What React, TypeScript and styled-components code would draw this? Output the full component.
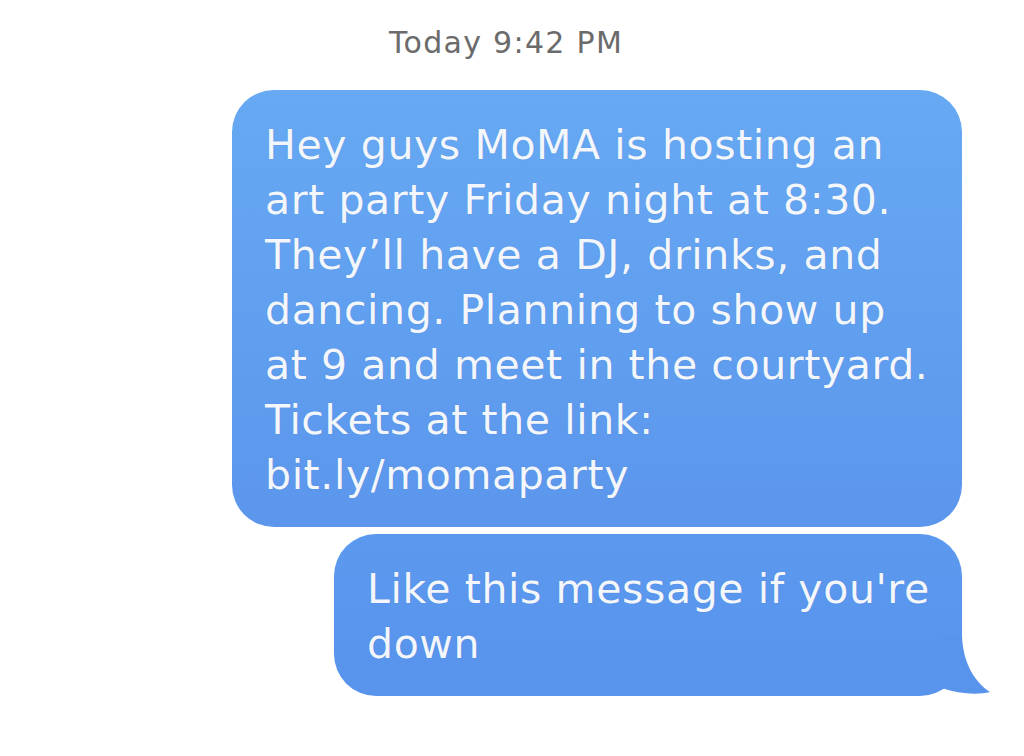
import styled, { createGlobalStyle } from "styled-components";

const GlobalStyle = createGlobalStyle`
  html, body {
    margin: 0;
    padding: 0;
    background: #ffffff;
  }
  body {
    font-family: Verdana, "DejaVu Sans", sans-serif;
  }
`;

const FIRST_MESSAGE = `Hey guys MoMA is hosting an
art party Friday night at 8:30.
They’ll have a DJ, drinks, and
dancing. Planning to show up
at 9 and meet in the courtyard.
Tickets at the link:
bit.ly/momaparty`;

const SECOND_MESSAGE = `Like this message if you're
down`;

const App = () => {
  return (
    <>
      <GlobalStyle />
      <Thread>
        <Timestamp>Today 9:42 PM</Timestamp>
        <Messages>
          <Bubble width="730px">{FIRST_MESSAGE}</Bubble>
          <Bubble width="628px" $tail>
            {SECOND_MESSAGE}
            <Tail viewBox="0 0 50 60" aria-hidden="true">
              <path d="M0 0 L20 0 C21 24 30 44 48 56 C36 59 16 58 0 52 Z" fill="#5994ec" />
            </Tail>
          </Bubble>
        </Messages>
      </Thread>
    </>
  );
};

export default App;

const Thread = styled.div`
  width: 1024px;
  height: 756px;
  display: flex;
  flex-direction: column;
  padding: 26px 62px 0 0;
  box-sizing: border-box;
`;

const Timestamp = styled.div`
  align-self: flex-start;
  margin-left: 389px;
  color: #6b6b6b;
  font-size: 30px;
  line-height: 34px;
  letter-spacing: 1.3px;
`;

const Messages = styled.div`
  display: flex;
  flex-direction: column;
  align-items: flex-end;
  gap: 7px;
  margin-top: 30px;
`;

const Bubble = styled.div<{ width: string; $tail?: boolean }>`
  position: relative;
  width: ${(p) => p.width};
  box-sizing: border-box;
  padding: 28px 10px 24px 33px;
  border-radius: 42px;
  background: ${(p) =>
    p.$tail ? "linear-gradient(180deg, #5b99ee 0%, #5893ec 100%)" : "linear-gradient(180deg, #67a9f3 0%, #5b96ec 100%)"};
  color: #f3f6fb;
  font-size: 41px;
  line-height: 55px;
  letter-spacing: 0.6px;
  white-space: pre-line;
  text-shadow: 0 0 1px rgba(60, 100, 170, 0.35);
`;

const Tail = styled.svg`
  position: absolute;
  right: -30px;
  bottom: 0;
  width: 50px;
  height: 60px;
`;
